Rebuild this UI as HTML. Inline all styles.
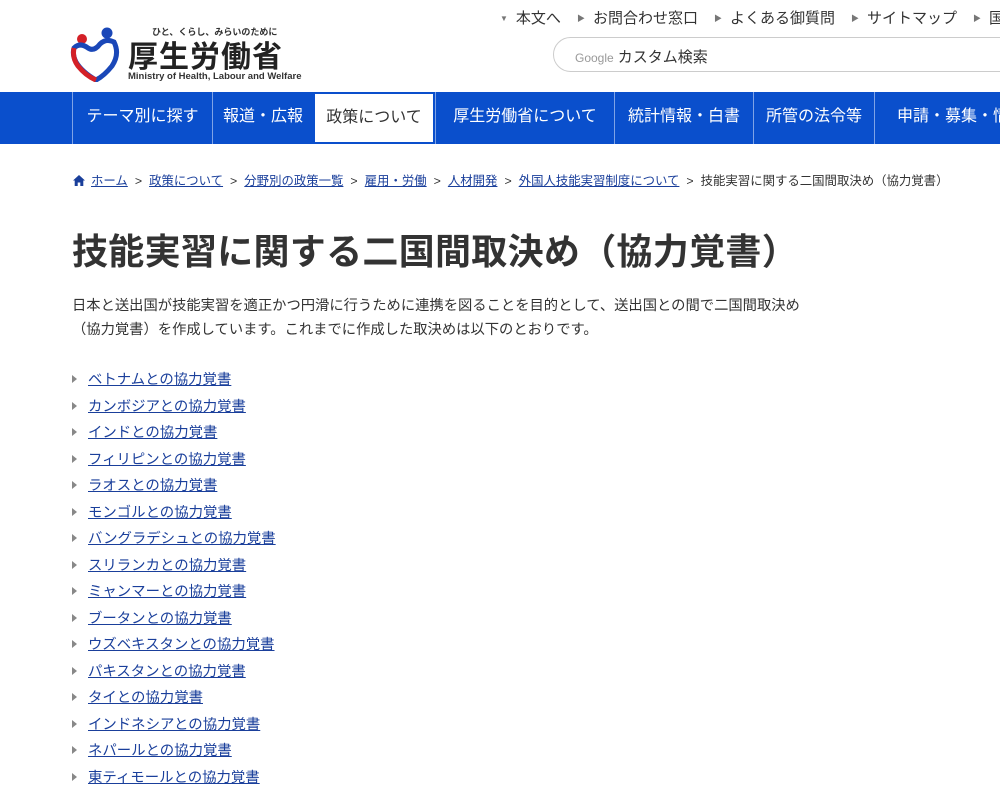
<!DOCTYPE html>
<html><head><meta charset="utf-8"><style>
body{margin:0;width:1000px;height:800px;overflow:hidden;background:#fff;font-family:"Liberation Sans","Noto Sans CJK JP",sans-serif;color:#333}
.top{position:absolute;top:7px;left:500px;font-size:15px;color:#333;white-space:nowrap}
.top span{margin-right:16px}
.top i{font-style:normal;font-size:8px;color:#777;margin-right:8px;vertical-align:2px}
.search{position:absolute;left:553px;top:37px;width:480px;height:35px;border:1px solid #ccc;border-radius:18px;box-sizing:border-box}
.search span{position:absolute;left:21px;top:8px;font-size:15px}
.search b{font-weight:normal;color:#999;font-size:12px;margin-right:4px}
nav{position:absolute;top:92px;left:0;width:1000px;height:52px;background:#0a4fcc}
nav div{position:absolute;top:0;height:52px;line-height:50px;color:#fff;font-size:16px;text-align:center;border-left:1px solid #7fa3e6;box-sizing:border-box;white-space:nowrap;overflow:hidden}
nav div.on{background:#fff;color:#333;border:2px solid #0a4fcc;line-height:48px}
.bc{position:absolute;top:171px;left:73px;font-size:12.4px;color:#333;white-space:nowrap}
.bc a{color:#1a3f9b;text-decoration:underline}
.bc em{font-style:normal;margin:0 7px}
h1{position:absolute;top:223px;left:72px;margin:0;font-size:36px;font-weight:bold;color:#333;letter-spacing:0.3px;white-space:nowrap}
p{position:absolute;top:294px;left:72px;margin:0;font-size:14.3px;line-height:24px;white-space:nowrap}
ul{position:absolute;top:367px;left:72px;margin:0;padding:0;list-style:none}
li{height:26.5px;line-height:26px;font-size:14.4px;white-space:nowrap}
li:before{content:"";display:inline-block;border-left:5px solid #888;border-top:4px solid transparent;border-bottom:4px solid transparent;margin-right:11px;vertical-align:1px}
li a{color:#1a3f9b;text-decoration:underline}
</style></head><body>
<svg style="position:absolute;left:70px;top:26px" width="52" height="56" viewBox="0 0 52 56">
<circle cx="12" cy="13" r="5" fill="#d42027"/><circle cx="37" cy="7" r="5.5" fill="#1a47b8"/>
<path d="M4 22 Q10 16 18 22 Q24 26 30 18 Q36 12 44 16 Q50 28 42 40 Q34 50 26 54 Q12 46 6 36 Q2 28 4 22Z" fill="none" stroke="#1a47b8" stroke-width="5"/>
<path d="M4 22 Q2 32 8 40 Q16 50 26 54" fill="none" stroke="#d42027" stroke-width="5"/>
</svg>
<div style="position:absolute;left:152px;top:25px;font-size:9px;font-weight:bold;color:#333">ひと、くらし、みらいのために</div>
<div style="position:absolute;left:128px;top:32px;font-size:30px;font-weight:bold;color:#222;letter-spacing:1px">厚生労働省</div>
<div style="position:absolute;left:128px;top:71px;font-size:9.5px;font-weight:bold;color:#333">Ministry of Health, Labour and Welfare</div>
<div class="top"><i>▼</i><span>本文へ</span><i>▶</i><span>お問合わせ窓口</span><i>▶</i><span>よくある御質問</span><i>▶</i><span>サイトマップ</span><i>▶</i><span>国</span></div>
<div class="search"><span><b>Google</b>カスタム検索</span></div>
<nav>
<div style="left:72px;width:140px">テーマ別に探す</div>
<div style="left:212px;width:101px">報道・広報</div>
<div class="on" style="left:313px;width:122px">政策について</div>
<div style="left:435px;width:179px">厚生労働省について</div>
<div style="left:614px;width:139px">統計情報・白書</div>
<div style="left:753px;width:121px">所管の法令等</div>
<div style="left:874px;width:140px;text-align:left;padding-left:22px">申請・募集・情報</div>
</nav>
<div class="bc"><svg width="12" height="11" viewBox="0 0 12 11" style="vertical-align:-1px;margin-right:6px"><path d="M6 0L0 5.5h1.7V11h3V7.5h2.6V11h3V5.5H12z" fill="#1a3f9b"/></svg><a>ホーム</a><em>&gt;</em><a>政策について</a><em>&gt;</em><a>分野別の政策一覧</a><em>&gt;</em><a>雇用・労働</a><em>&gt;</em><a>人材開発</a><em>&gt;</em><a>外国人技能実習制度について</a><em>&gt;</em>技能実習に関する二国間取決め（協力覚書）</div>
<h1>技能実習に関する二国間取決め（協力覚書）</h1>
<p>日本と送出国が技能実習を適正かつ円滑に行うために連携を図ることを目的として、送出国との間で二国間取決め<br>（協力覚書）を作成しています。これまでに作成した取決めは以下のとおりです。</p>
<ul>
<li><a>ベトナムとの協力覚書</a></li><li><a>カンボジアとの協力覚書</a></li><li><a>インドとの協力覚書</a></li><li><a>フィリピンとの協力覚書</a></li><li><a>ラオスとの協力覚書</a></li><li><a>モンゴルとの協力覚書</a></li><li><a>バングラデシュとの協力覚書</a></li><li><a>スリランカとの協力覚書</a></li><li><a>ミャンマーとの協力覚書</a></li><li><a>ブータンとの協力覚書</a></li><li><a>ウズベキスタンとの協力覚書</a></li><li><a>パキスタンとの協力覚書</a></li><li><a>タイとの協力覚書</a></li><li><a>インドネシアとの協力覚書</a></li><li><a>ネパールとの協力覚書</a></li><li><a>東ティモールとの協力覚書</a></li>
</ul>
</body></html>
